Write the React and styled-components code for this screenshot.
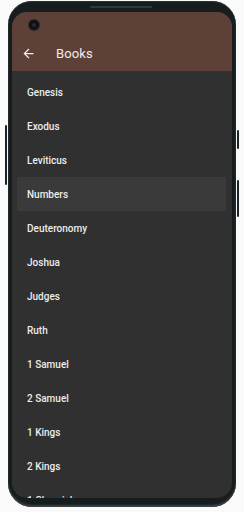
import React from "react";
import styled, { createGlobalStyle } from "styled-components";

const GlobalStyle = createGlobalStyle`
  html, body {
    margin: 0;
    padding: 0;
    background: #fafafa;
    font-family: Roboto, "Noto Sans", "Liberation Sans", sans-serif;
  }
`;

const Page = styled.div`
  width: 244px;
  height: 512px;
  padding: 1px 0 0 8px;
  box-sizing: border-box;
`;

const Phone = styled.div`
  position: relative;
  width: 228px;
  height: 506px;
  box-sizing: border-box;
  padding: 11px 4px 9px 4px;
  border-radius: 24px;
  background: #171c1e;
  box-shadow: inset 0 -2px 2px #3b4448, inset 0 1px 1px #2c3336;
`;

const SideButton = styled.div`
  position: absolute;
  width: 2px;
  top: ${p => p.top}px;
  height: ${p => p.h}px;
  ${p => (p.left ? "left: -3px;" : "right: -3px;")}
  background: #1d2326;
  border-radius: 1px;
`;

const Speaker = styled.div`
  position: absolute;
  top: 5px;
  left: 82px;
  width: 62px;
  height: 2px;
  border-radius: 1px;
  background: #30383b;
`;

const Screen = styled.div`
  position: relative;
  height: 100%;
  border-radius: 15px;
  overflow: hidden;
  background: #303030;
  display: flex;
  flex-direction: column;
`;

const Camera = styled.div`
  position: absolute;
  top: 8px;
  left: 17px;
  width: 10px;
  height: 10px;
  border-radius: 50%;
  background: #111;
  box-shadow: 0 0 0 1px #2a2a2a;
  &::after {
    content: "";
    position: absolute;
    top: 3px;
    left: 3px;
    width: 4px;
    height: 4px;
    border-radius: 50%;
    background: #262a2c;
  }
`;

const AppBar = styled.div`
  flex: none;
  height: 59px;
  background: #5d4037;
  display: flex;
  align-items: flex-end;
  box-sizing: border-box;
  padding: 0 0 0 9px;
`;

const Toolbar = styled.div`
  height: 36px;
  display: flex;
  align-items: center;
  gap: 20px;
`;

const Title = styled.span`
  color: #f4ebe8;
  font-size: 13px;
  letter-spacing: 0.1px;
`;

const List = styled.div`
  padding: 4px 6px 0 5px;
  display: flex;
  flex-direction: column;
`;

const Row = styled.div`
  height: 34px;
  flex: none;
  display: flex;
  align-items: center;
  padding-left: 10px;
  font-size: 10px;
  font-weight: 500;
  color: #ececec;
  background: ${p => (p.active ? "#3a3a3a" : "transparent")};
`;

const books = [
  "Genesis",
  "Exodus",
  "Leviticus",
  "Numbers",
  "Deuteronomy",
  "Joshua",
  "Judges",
  "Ruth",
  "1 Samuel",
  "2 Samuel",
  "1 Kings",
  "2 Kings",
  "1 Chronicles",
];

const BackArrow = () => (
  <svg width="15" height="15" viewBox="0 0 24 24" fill="#f4ebe8">
    <path d="M20 11H7.83l5.59-5.59L12 4l-8 8 8 8 1.41-1.41L7.83 13H20v-2z" />
  </svg>
);

const App = () => {
  return (
    <Page>
      <GlobalStyle />
      <Phone>
        <SideButton left top={124} h={60} />
        <SideButton top={129} h={19} />
        <SideButton top={179} h={37} />
        <Speaker />
        <Screen>
          <Camera />
          <AppBar>
            <Toolbar>
              <BackArrow />
              <Title>Books</Title>
            </Toolbar>
          </AppBar>
          <List>
            {books.map(b => (
              <Row key={b} active={b === "Numbers"}>
                {b}
              </Row>
            ))}
          </List>
        </Screen>
      </Phone>
    </Page>
  );
};

export default App;
